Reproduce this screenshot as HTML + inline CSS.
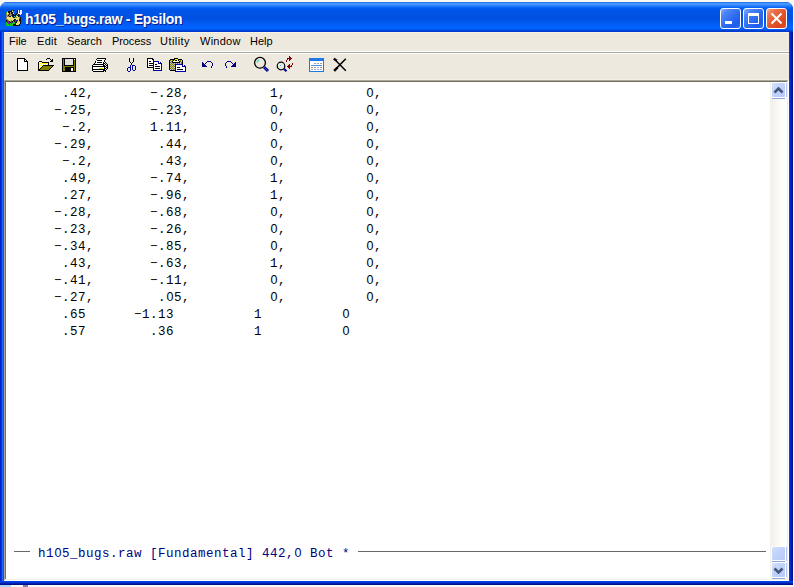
<!DOCTYPE html>
<html><head><meta charset="utf-8">
<style>
*{margin:0;padding:0;box-sizing:border-box}
html,body{width:794px;height:587px;overflow:hidden;background:#FAF9F4;position:relative}
.a{position:absolute}
svg{position:absolute;shape-rendering:crispEdges;overflow:visible}
.tt{font-family:"Liberation Sans",sans-serif;font-weight:bold;color:#fff;font-size:14px;letter-spacing:-0.3px;white-space:nowrap;text-shadow:1px 1px 0 #0A1883}
.mn{font-family:"Liberation Sans",sans-serif;font-size:11px;color:#000;white-space:nowrap;line-height:14px}
.mono{font-family:"Liberation Mono",monospace;font-size:12.5px;letter-spacing:0.5px;white-space:pre;line-height:17px}
.z{display:inline-block;width:8px;line-height:0;font-family:"Liberation Sans",sans-serif;font-size:12.5px;letter-spacing:0;text-align:center}
.btn{width:21px;height:21px;border:1px solid #fff;border-radius:3px}
.bmin{background:linear-gradient(135deg,#8AB0FA 0%,#4C84F6 22%,#2E6BF2 55%,#1F5CEB 80%,#3570F0 100%)}
.bcls{background:linear-gradient(135deg,#F4A88C 0%,#EA7450 22%,#E2552C 55%,#D8441C 80%,#E05A30 100%)}
.sb{border:1px solid #fff;border-radius:2px;background:linear-gradient(135deg,#D4E0FC 0%,#C3D3FB 40%,#B6CAF8 100%)}
</style></head><body>
<!-- bottom background strip -->
<div class="a" style="left:0;top:585px;width:11px;height:2px;background:#A8D8F8"></div>
<div class="a" style="left:23px;top:585px;width:5px;height:2px;background:#8080B0"></div>

<!-- window frame -->
<div class="a" style="left:0;top:2px;width:793px;height:583px;border-radius:7px 7px 0 0;overflow:hidden;
 background:linear-gradient(90deg,#0020D8 0,#0020D8 1px,#0838D8 1px,#0838D8 2px,#2068F0 2px,#2068F0 3px,#0058E8 3px,#0058E8 789px,#0048F0 789px,#0038E0 790px,#0020C0 791px,#00108A 792px,#00108A 793px)">
  <div class="a" style="left:0;top:0;width:793px;height:30px;
   background:linear-gradient(180deg,#1048D8 0px,#4A9CFF 1px,#3A8EFF 3px,#0E6CF6 5px,#0056EA 7px,#0050E0 16px,#005CF4 22px,#0064FF 26px,#0058F0 27.5px,#003CD0 29px,#0038C8 30px)"></div>
  <div class="a" style="left:0;top:579px;width:793px;height:4px;background:linear-gradient(180deg,#0048EE 0,#0040E4 1px,#0028C0 2px,#00149A 3px,#000A80 4px)"></div>
</div>

<!-- client area -->
<div class="a" style="left:4px;top:32px;width:785px;height:48px;background:#EDE9DE"></div>
<div class="a" style="left:4px;top:32px;width:785px;height:1px;background:#F8F4E4"></div>
<div class="a" style="left:4px;top:51px;width:785px;height:1px;background:#FFFFFB"></div>
<div class="a" style="left:4px;top:52px;width:785px;height:1px;background:#A9A89F"></div>
<div class="a" style="left:4px;top:53px;width:785px;height:1px;background:#FFFFFF"></div>
<div class="a" style="left:4px;top:79px;width:785px;height:1px;background:#F2EFE6"></div>

<!-- text area (sunken) -->
<div class="a" style="left:4px;top:80px;width:785px;height:501px;background:#fff"></div>
<div class="a" style="left:4px;top:80px;width:784px;height:1px;background:#ACA899"></div>
<div class="a" style="left:4px;top:80px;width:1px;height:500px;background:#ACA899"></div>
<div class="a" style="left:5px;top:81px;width:782px;height:1px;background:#716F64"></div>
<div class="a" style="left:5px;top:81px;width:1px;height:498px;background:#716F64"></div>
<div class="a" style="left:5px;top:579px;width:783px;height:1px;background:#F4F1E6"></div>
<div class="a" style="left:787px;top:81px;width:1px;height:498px;background:#F1EFE2"></div>

<!-- scrollbar -->
<div class="a" style="left:770px;top:82px;width:17px;height:496px;background:linear-gradient(90deg,#F3F1EC 0,#F4F3EE 4px,#FDFDFA 12px,#FEFEFE 17px)"></div>
<div class="a sb" style="left:771px;top:82px;width:15px;height:16px"></div>
<div class="a" style="left:772px;top:98px;width:13px;height:1px;background:#8FA6D9"></div>
<div class="a" style="left:786px;top:83px;width:1px;height:14px;background:#B4C6EA"></div>
<svg style="left:771px;top:82px" width="15" height="16"><path d="M3.5 10.5 L7.5 6.5 L11.5 10.5" stroke="#44557C" stroke-width="2.6" fill="none" style="shape-rendering:auto"/></svg>
<div class="a sb" style="left:771px;top:546px;width:15px;height:15px"></div>
<div class="a" style="left:772px;top:561px;width:13px;height:1px;background:#8FA6D9"></div>
<div class="a" style="left:786px;top:547px;width:1px;height:14px;background:#B4C6EA"></div>
<div class="a sb" style="left:771px;top:562px;width:15px;height:16px"></div>
<div class="a" style="left:772px;top:578px;width:13px;height:1px;background:#8FA6D9"></div>
<div class="a" style="left:786px;top:563px;width:1px;height:14px;background:#B4C6EA"></div>
<svg style="left:771px;top:562px" width="15" height="16"><path d="M3.5 6.5 L7.5 10.5 L11.5 6.5" stroke="#44557C" stroke-width="2.6" fill="none" style="shape-rendering:auto"/></svg>

<!-- title icon -->
<svg style="left:6px;top:10px" width="16" height="16"><rect x="5" y="0" width="1" height="1" fill="#101010"/><rect x="6" y="0" width="1" height="1" fill="#8C8C20"/><rect x="7" y="0" width="1" height="1" fill="#101010"/><rect x="11" y="0" width="1" height="1" fill="#101010"/><rect x="12" y="0" width="1" height="1" fill="#F0F0FF"/><rect x="13" y="0" width="1" height="1" fill="#3040E0"/><rect x="14" y="0" width="1" height="1" fill="#F0F0FF"/><rect x="15" y="0" width="1" height="1" fill="#F0F0FF"/><rect x="1" y="1" width="1" height="1" fill="#10C818"/><rect x="2" y="1" width="1" height="1" fill="#101010"/><rect x="3" y="1" width="1" height="1" fill="#101010"/><rect x="4" y="1" width="1" height="1" fill="#101010"/><rect x="5" y="1" width="1" height="1" fill="#101010"/><rect x="6" y="1" width="1" height="1" fill="#E8E070"/><rect x="7" y="1" width="1" height="1" fill="#8C8C20"/><rect x="11" y="1" width="1" height="1" fill="#101010"/><rect x="12" y="1" width="1" height="1" fill="#F0F0FF"/><rect x="13" y="1" width="1" height="1" fill="#3040E0"/><rect x="14" y="1" width="1" height="1" fill="#F0F0FF"/><rect x="15" y="1" width="1" height="1" fill="#F0F0FF"/><rect x="0" y="2" width="1" height="1" fill="#10C818"/><rect x="1" y="2" width="1" height="1" fill="#E8E070"/><rect x="2" y="2" width="1" height="1" fill="#101010"/><rect x="3" y="2" width="1" height="1" fill="#101010"/><rect x="4" y="2" width="1" height="1" fill="#A89070"/><rect x="5" y="2" width="1" height="1" fill="#101010"/><rect x="6" y="2" width="1" height="1" fill="#101010"/><rect x="7" y="2" width="1" height="1" fill="#8C8C20"/><rect x="11" y="2" width="1" height="1" fill="#101010"/><rect x="12" y="2" width="1" height="1" fill="#F0F0FF"/><rect x="13" y="2" width="1" height="1" fill="#3040E0"/><rect x="14" y="2" width="1" height="1" fill="#F0F0FF"/><rect x="15" y="2" width="1" height="1" fill="#F0F0FF"/><rect x="0" y="3" width="1" height="1" fill="#8C8C20"/><rect x="1" y="3" width="1" height="1" fill="#E8E070"/><rect x="2" y="3" width="1" height="1" fill="#E8E070"/><rect x="3" y="3" width="1" height="1" fill="#101010"/><rect x="4" y="3" width="1" height="1" fill="#A89070"/><rect x="5" y="3" width="1" height="1" fill="#101010"/><rect x="6" y="3" width="1" height="1" fill="#101010"/><rect x="7" y="3" width="1" height="1" fill="#E8E070"/><rect x="10" y="3" width="1" height="1" fill="#101010"/><rect x="12" y="3" width="1" height="1" fill="#F0F0FF"/><rect x="13" y="3" width="1" height="1" fill="#F0F0FF"/><rect x="14" y="3" width="1" height="1" fill="#F0F0FF"/><rect x="15" y="3" width="1" height="1" fill="#F0F0FF"/><rect x="0" y="4" width="1" height="1" fill="#8C8C20"/><rect x="1" y="4" width="1" height="1" fill="#E8E070"/><rect x="2" y="4" width="1" height="1" fill="#8C8C20"/><rect x="3" y="4" width="1" height="1" fill="#101010"/><rect x="4" y="4" width="1" height="1" fill="#A89070"/><rect x="5" y="4" width="1" height="1" fill="#A89070"/><rect x="6" y="4" width="1" height="1" fill="#101010"/><rect x="7" y="4" width="1" height="1" fill="#101010"/><rect x="9" y="4" width="1" height="1" fill="#101010"/><rect x="10" y="4" width="1" height="1" fill="#101010"/><rect x="11" y="4" width="1" height="1" fill="#20E0E0"/><rect x="12" y="4" width="1" height="1" fill="#101010"/><rect x="14" y="4" width="1" height="1" fill="#F0F0FF"/><rect x="0" y="5" width="1" height="1" fill="#808080"/><rect x="1" y="5" width="1" height="1" fill="#8C8C20"/><rect x="2" y="5" width="1" height="1" fill="#101010"/><rect x="3" y="5" width="1" height="1" fill="#A89070"/><rect x="4" y="5" width="1" height="1" fill="#A89070"/><rect x="5" y="5" width="1" height="1" fill="#8818A8"/><rect x="6" y="5" width="1" height="1" fill="#101010"/><rect x="7" y="5" width="1" height="1" fill="#101010"/><rect x="8" y="5" width="1" height="1" fill="#101010"/><rect x="9" y="5" width="1" height="1" fill="#101010"/><rect x="10" y="5" width="1" height="1" fill="#20E0E0"/><rect x="11" y="5" width="1" height="1" fill="#101010"/><rect x="12" y="5" width="1" height="1" fill="#101010"/><rect x="13" y="5" width="1" height="1" fill="#101010"/><rect x="0" y="6" width="1" height="1" fill="#808080"/><rect x="1" y="6" width="1" height="1" fill="#8C8C20"/><rect x="2" y="6" width="1" height="1" fill="#A89070"/><rect x="3" y="6" width="1" height="1" fill="#101010"/><rect x="4" y="6" width="1" height="1" fill="#101010"/><rect x="5" y="6" width="1" height="1" fill="#E8E070"/><rect x="6" y="6" width="1" height="1" fill="#101010"/><rect x="7" y="6" width="1" height="1" fill="#101010"/><rect x="8" y="6" width="1" height="1" fill="#20E0E0"/><rect x="9" y="6" width="1" height="1" fill="#101010"/><rect x="10" y="6" width="1" height="1" fill="#E8E070"/><rect x="11" y="6" width="1" height="1" fill="#E8E070"/><rect x="12" y="6" width="1" height="1" fill="#101010"/><rect x="0" y="7" width="1" height="1" fill="#808080"/><rect x="1" y="7" width="1" height="1" fill="#F8F0A0"/><rect x="2" y="7" width="1" height="1" fill="#E8E070"/><rect x="3" y="7" width="1" height="1" fill="#E8E070"/><rect x="4" y="7" width="1" height="1" fill="#E8E070"/><rect x="5" y="7" width="1" height="1" fill="#E8E070"/><rect x="6" y="7" width="1" height="1" fill="#E8E070"/><rect x="7" y="7" width="1" height="1" fill="#101010"/><rect x="8" y="7" width="1" height="1" fill="#101010"/><rect x="9" y="7" width="1" height="1" fill="#20E0E0"/><rect x="10" y="7" width="1" height="1" fill="#8C8C20"/><rect x="11" y="7" width="1" height="1" fill="#E8E070"/><rect x="12" y="7" width="1" height="1" fill="#E8E070"/><rect x="13" y="7" width="1" height="1" fill="#8C8C20"/><rect x="14" y="7" width="1" height="1" fill="#101010"/><rect x="0" y="8" width="1" height="1" fill="#8C8C20"/><rect x="1" y="8" width="1" height="1" fill="#E8E070"/><rect x="2" y="8" width="1" height="1" fill="#F8F0A0"/><rect x="3" y="8" width="1" height="1" fill="#E8E070"/><rect x="4" y="8" width="1" height="1" fill="#E8E070"/><rect x="5" y="8" width="1" height="1" fill="#E8E070"/><rect x="6" y="8" width="1" height="1" fill="#E8E070"/><rect x="7" y="8" width="1" height="1" fill="#E8E070"/><rect x="8" y="8" width="1" height="1" fill="#E8E070"/><rect x="9" y="8" width="1" height="1" fill="#E8E070"/><rect x="10" y="8" width="1" height="1" fill="#E8E070"/><rect x="11" y="8" width="1" height="1" fill="#E8E070"/><rect x="12" y="8" width="1" height="1" fill="#E8E070"/><rect x="13" y="8" width="1" height="1" fill="#8C8C20"/><rect x="14" y="8" width="1" height="1" fill="#101010"/><rect x="0" y="9" width="1" height="1" fill="#808080"/><rect x="1" y="9" width="1" height="1" fill="#8C8C20"/><rect x="2" y="9" width="1" height="1" fill="#E8E070"/><rect x="3" y="9" width="1" height="1" fill="#E8E070"/><rect x="4" y="9" width="1" height="1" fill="#E8E070"/><rect x="5" y="9" width="1" height="1" fill="#E8E070"/><rect x="6" y="9" width="1" height="1" fill="#E8E070"/><rect x="7" y="9" width="1" height="1" fill="#E8E070"/><rect x="8" y="9" width="1" height="1" fill="#101010"/><rect x="9" y="9" width="1" height="1" fill="#101010"/><rect x="10" y="9" width="1" height="1" fill="#E8E070"/><rect x="11" y="9" width="1" height="1" fill="#E8E070"/><rect x="12" y="9" width="1" height="1" fill="#E8E070"/><rect x="13" y="9" width="1" height="1" fill="#101010"/><rect x="14" y="9" width="1" height="1" fill="#101010"/><rect x="0" y="10" width="1" height="1" fill="#101010"/><rect x="1" y="10" width="1" height="1" fill="#8818A8"/><rect x="2" y="10" width="1" height="1" fill="#8C8C20"/><rect x="3" y="10" width="1" height="1" fill="#E8E070"/><rect x="4" y="10" width="1" height="1" fill="#E8E070"/><rect x="5" y="10" width="1" height="1" fill="#8C8C20"/><rect x="6" y="10" width="1" height="1" fill="#E8E070"/><rect x="7" y="10" width="1" height="1" fill="#101010"/><rect x="8" y="10" width="1" height="1" fill="#101010"/><rect x="9" y="10" width="1" height="1" fill="#3040E0"/><rect x="10" y="10" width="1" height="1" fill="#3040E0"/><rect x="11" y="10" width="1" height="1" fill="#101010"/><rect x="12" y="10" width="1" height="1" fill="#E8E070"/><rect x="13" y="10" width="1" height="1" fill="#101010"/><rect x="14" y="10" width="1" height="1" fill="#101010"/><rect x="0" y="11" width="1" height="1" fill="#101010"/><rect x="1" y="11" width="1" height="1" fill="#8818A8"/><rect x="2" y="11" width="1" height="1" fill="#8818A8"/><rect x="3" y="11" width="1" height="1" fill="#101010"/><rect x="4" y="11" width="1" height="1" fill="#8C8C20"/><rect x="5" y="11" width="1" height="1" fill="#8818A8"/><rect x="6" y="11" width="1" height="1" fill="#101010"/><rect x="7" y="11" width="1" height="1" fill="#10C818"/><rect x="8" y="11" width="1" height="1" fill="#101010"/><rect x="9" y="11" width="1" height="1" fill="#3040E0"/><rect x="10" y="11" width="1" height="1" fill="#101010"/><rect x="11" y="11" width="1" height="1" fill="#A89070"/><rect x="12" y="11" width="1" height="1" fill="#E8E070"/><rect x="13" y="11" width="1" height="1" fill="#A89070"/><rect x="14" y="11" width="1" height="1" fill="#101010"/><rect x="0" y="12" width="1" height="1" fill="#10C818"/><rect x="1" y="12" width="1" height="1" fill="#8818A8"/><rect x="2" y="12" width="1" height="1" fill="#8818A8"/><rect x="3" y="12" width="1" height="1" fill="#8818A8"/><rect x="4" y="12" width="1" height="1" fill="#101010"/><rect x="5" y="12" width="1" height="1" fill="#8818A8"/><rect x="6" y="12" width="1" height="1" fill="#8818A8"/><rect x="7" y="12" width="1" height="1" fill="#10C818"/><rect x="8" y="12" width="1" height="1" fill="#10C818"/><rect x="9" y="12" width="1" height="1" fill="#101010"/><rect x="10" y="12" width="1" height="1" fill="#101010"/><rect x="11" y="12" width="1" height="1" fill="#E8E070"/><rect x="12" y="12" width="1" height="1" fill="#E8E070"/><rect x="13" y="12" width="1" height="1" fill="#E8E070"/><rect x="14" y="12" width="1" height="1" fill="#101010"/><rect x="0" y="13" width="1" height="1" fill="#10C818"/><rect x="1" y="13" width="1" height="1" fill="#10C818"/><rect x="2" y="13" width="1" height="1" fill="#8818A8"/><rect x="3" y="13" width="1" height="1" fill="#8818A8"/><rect x="4" y="13" width="1" height="1" fill="#10C818"/><rect x="5" y="13" width="1" height="1" fill="#8818A8"/><rect x="6" y="13" width="1" height="1" fill="#10C818"/><rect x="7" y="13" width="1" height="1" fill="#10C818"/><rect x="8" y="13" width="1" height="1" fill="#10C818"/><rect x="9" y="13" width="1" height="1" fill="#101010"/><rect x="10" y="13" width="1" height="1" fill="#E8E070"/><rect x="11" y="13" width="1" height="1" fill="#E8E070"/><rect x="12" y="13" width="1" height="1" fill="#E8E070"/><rect x="13" y="13" width="1" height="1" fill="#E8E070"/><rect x="14" y="13" width="1" height="1" fill="#101010"/><rect x="0" y="14" width="1" height="1" fill="#10C818"/><rect x="1" y="14" width="1" height="1" fill="#10C818"/><rect x="2" y="14" width="1" height="1" fill="#10C818"/><rect x="3" y="14" width="1" height="1" fill="#8818A8"/><rect x="4" y="14" width="1" height="1" fill="#10C818"/><rect x="5" y="14" width="1" height="1" fill="#10C818"/><rect x="6" y="14" width="1" height="1" fill="#10C818"/><rect x="7" y="14" width="1" height="1" fill="#101010"/><rect x="8" y="14" width="1" height="1" fill="#101010"/><rect x="9" y="14" width="1" height="1" fill="#101010"/><rect x="10" y="14" width="1" height="1" fill="#E8E070"/><rect x="11" y="14" width="1" height="1" fill="#E8E070"/><rect x="12" y="14" width="1" height="1" fill="#E8E070"/><rect x="13" y="14" width="1" height="1" fill="#101010"/><rect x="0" y="15" width="1" height="1" fill="#10C818"/><rect x="1" y="15" width="1" height="1" fill="#10C818"/><rect x="2" y="15" width="1" height="1" fill="#10C818"/><rect x="3" y="15" width="1" height="1" fill="#10C818"/><rect x="4" y="15" width="1" height="1" fill="#10C818"/><rect x="5" y="15" width="1" height="1" fill="#10C818"/><rect x="6" y="15" width="1" height="1" fill="#10C818"/><rect x="7" y="15" width="1" height="1" fill="#101010"/><rect x="8" y="15" width="1" height="1" fill="#101010"/><rect x="9" y="15" width="1" height="1" fill="#101010"/><rect x="10" y="15" width="1" height="1" fill="#101010"/><rect x="11" y="15" width="1" height="1" fill="#101010"/><rect x="12" y="15" width="1" height="1" fill="#101010"/><rect x="13" y="15" width="1" height="1" fill="#101010"/></svg>
<!-- title text -->
<div class="a tt" style="left:25px;top:11px;">h105_bugs.raw - Epsilon</div>

<!-- title buttons -->
<div class="a btn bmin" style="left:720px;top:8px"></div>
<div class="a" style="left:725px;top:21px;width:7px;height:3px;background:#fff"></div>
<div class="a btn bmin" style="left:743px;top:8px"></div>
<div class="a" style="left:748px;top:13px;width:11px;height:11px;border:1px solid #fff;border-top-width:3px"></div>
<div class="a btn bcls" style="left:766px;top:8px"></div>
<svg style="left:766px;top:8px" width="21" height="21"><path d="M5.5 5.5 L15.5 15.5 M15.5 5.5 L5.5 15.5" stroke="#fff" stroke-width="2" style="shape-rendering:auto"/></svg>

<!-- menu -->
<div class="a mn" style="left:9px;top:34px">File</div>
<div class="a mn" style="left:37px;top:34px;letter-spacing:0.3px">Edit</div>
<div class="a mn" style="left:67px;top:34px">Search</div>
<div class="a mn" style="left:112px;top:34px;letter-spacing:-0.1px">Process</div>
<div class="a mn" style="left:160px;top:34px;letter-spacing:0.45px">Utility</div>
<div class="a mn" style="left:200px;top:34px;letter-spacing:0.25px">Window</div>
<div class="a mn" style="left:250px;top:34px">Help</div>


<!-- new -->
<svg style="left:17px;top:58px" width="11" height="13"><rect x="0" y="0" width="8" height="1" fill="#000"/><rect x="0" y="1" width="1" height="1" fill="#000"/><rect x="1" y="1" width="6" height="1" fill="#FFFFFF"/><rect x="7" y="1" width="2" height="1" fill="#000"/><rect x="0" y="2" width="1" height="1" fill="#000"/><rect x="1" y="2" width="6" height="1" fill="#FFFFFF"/><rect x="7" y="2" width="1" height="1" fill="#000"/><rect x="8" y="2" width="1" height="1" fill="#FFFFFF"/><rect x="9" y="2" width="1" height="1" fill="#000"/><rect x="0" y="3" width="1" height="1" fill="#000"/><rect x="1" y="3" width="6" height="1" fill="#FFFFFF"/><rect x="7" y="3" width="4" height="1" fill="#000"/><rect x="0" y="4" width="1" height="1" fill="#000"/><rect x="1" y="4" width="9" height="1" fill="#FFFFFF"/><rect x="10" y="4" width="1" height="1" fill="#000"/><rect x="0" y="5" width="1" height="1" fill="#000"/><rect x="1" y="5" width="9" height="1" fill="#FFFFFF"/><rect x="10" y="5" width="1" height="1" fill="#000"/><rect x="0" y="6" width="1" height="1" fill="#000"/><rect x="1" y="6" width="9" height="1" fill="#FFFFFF"/><rect x="10" y="6" width="1" height="1" fill="#000"/><rect x="0" y="7" width="1" height="1" fill="#000"/><rect x="1" y="7" width="9" height="1" fill="#FFFFFF"/><rect x="10" y="7" width="1" height="1" fill="#000"/><rect x="0" y="8" width="1" height="1" fill="#000"/><rect x="1" y="8" width="9" height="1" fill="#FFFFFF"/><rect x="10" y="8" width="1" height="1" fill="#000"/><rect x="0" y="9" width="1" height="1" fill="#000"/><rect x="1" y="9" width="9" height="1" fill="#FFFFFF"/><rect x="10" y="9" width="1" height="1" fill="#000"/><rect x="0" y="10" width="1" height="1" fill="#000"/><rect x="1" y="10" width="9" height="1" fill="#FFFFFF"/><rect x="10" y="10" width="1" height="1" fill="#000"/><rect x="0" y="11" width="1" height="1" fill="#000"/><rect x="1" y="11" width="9" height="1" fill="#FFFFFF"/><rect x="10" y="11" width="1" height="1" fill="#000"/><rect x="0" y="12" width="11" height="1" fill="#000"/></svg>
<!-- open -->
<svg style="left:37px;top:58px" width="17" height="13"><rect x="10" y="0" width="3" height="1" fill="#000"/><rect x="9" y="1" width="1" height="1" fill="#000"/><rect x="13" y="1" width="1" height="1" fill="#000"/><rect x="15" y="1" width="1" height="1" fill="#000"/><rect x="14" y="2" width="2" height="1" fill="#000"/><rect x="2" y="3" width="3" height="1" fill="#000"/><rect x="13" y="3" width="3" height="1" fill="#000"/><rect x="1" y="4" width="1" height="1" fill="#000"/><rect x="2" y="4" width="1" height="1" fill="#FFFF00"/><rect x="3" y="4" width="1" height="1" fill="#FFFFFF"/><rect x="4" y="4" width="1" height="1" fill="#FFFF00"/><rect x="5" y="4" width="7" height="1" fill="#000"/><rect x="1" y="5" width="1" height="1" fill="#000"/><rect x="2" y="5" width="1" height="1" fill="#FFFFFF"/><rect x="3" y="5" width="1" height="1" fill="#FFFF00"/><rect x="4" y="5" width="1" height="1" fill="#FFFFFF"/><rect x="5" y="5" width="1" height="1" fill="#FFFF00"/><rect x="6" y="5" width="1" height="1" fill="#FFFFFF"/><rect x="7" y="5" width="1" height="1" fill="#FFFF00"/><rect x="8" y="5" width="1" height="1" fill="#FFFFFF"/><rect x="9" y="5" width="1" height="1" fill="#FFFF00"/><rect x="10" y="5" width="1" height="1" fill="#FFFFFF"/><rect x="11" y="5" width="1" height="1" fill="#000"/><rect x="1" y="6" width="1" height="1" fill="#000"/><rect x="2" y="6" width="1" height="1" fill="#FFFF00"/><rect x="3" y="6" width="1" height="1" fill="#FFFFFF"/><rect x="4" y="6" width="1" height="1" fill="#FFFF00"/><rect x="5" y="6" width="1" height="1" fill="#FFFFFF"/><rect x="6" y="6" width="1" height="1" fill="#FFFF00"/><rect x="7" y="6" width="1" height="1" fill="#FFFFFF"/><rect x="8" y="6" width="1" height="1" fill="#FFFF00"/><rect x="9" y="6" width="1" height="1" fill="#FFFFFF"/><rect x="10" y="6" width="1" height="1" fill="#FFFF00"/><rect x="11" y="6" width="1" height="1" fill="#000"/><rect x="1" y="7" width="1" height="1" fill="#000"/><rect x="2" y="7" width="1" height="1" fill="#FFFFFF"/><rect x="3" y="7" width="1" height="1" fill="#FFFF00"/><rect x="4" y="7" width="1" height="1" fill="#FFFFFF"/><rect x="5" y="7" width="1" height="1" fill="#FFFF00"/><rect x="6" y="7" width="11" height="1" fill="#000"/><rect x="1" y="8" width="1" height="1" fill="#000"/><rect x="2" y="8" width="1" height="1" fill="#FFFF00"/><rect x="3" y="8" width="1" height="1" fill="#FFFFFF"/><rect x="4" y="8" width="1" height="1" fill="#FFFF00"/><rect x="5" y="8" width="1" height="1" fill="#000"/><rect x="6" y="8" width="9" height="1" fill="#808000"/><rect x="15" y="8" width="1" height="1" fill="#000"/><rect x="1" y="9" width="1" height="1" fill="#000"/><rect x="2" y="9" width="1" height="1" fill="#FFFFFF"/><rect x="3" y="9" width="1" height="1" fill="#FFFF00"/><rect x="4" y="9" width="1" height="1" fill="#000"/><rect x="5" y="9" width="9" height="1" fill="#808000"/><rect x="14" y="9" width="1" height="1" fill="#000"/><rect x="1" y="10" width="1" height="1" fill="#000"/><rect x="2" y="10" width="1" height="1" fill="#FFFF00"/><rect x="3" y="10" width="1" height="1" fill="#000"/><rect x="4" y="10" width="9" height="1" fill="#808000"/><rect x="13" y="10" width="1" height="1" fill="#000"/><rect x="1" y="11" width="2" height="1" fill="#000"/><rect x="3" y="11" width="9" height="1" fill="#808000"/><rect x="12" y="11" width="1" height="1" fill="#000"/><rect x="1" y="12" width="11" height="1" fill="#000"/></svg>
<!-- save -->
<svg style="left:62px;top:58px" width="14" height="14">
<rect x="0" y="0" width="14" height="14" fill="#000"/>
<rect x="1" y="1" width="12" height="12" fill="#808000"/>
<rect x="2" y="0" width="10" height="8" fill="#000"/>
<rect x="3" y="1" width="8" height="6" fill="#E0E0DC"/>
<rect x="12" y="1" width="1" height="1" fill="#fff"/>
<rect x="3" y="9" width="9" height="5" fill="#000"/>
<rect x="9" y="10" width="2" height="3" fill="#fff"/>
</svg>
<!-- print -->
<svg style="left:92px;top:58px" width="16" height="14"><rect x="5" y="0" width="9" height="1" fill="#000"/><rect x="4" y="1" width="1" height="1" fill="#000"/><rect x="5" y="1" width="8" height="1" fill="#FFFFFF"/><rect x="13" y="1" width="1" height="1" fill="#000"/><rect x="4" y="2" width="1" height="1" fill="#FFFFFF"/><rect x="5" y="2" width="5" height="1" fill="#000"/><rect x="10" y="2" width="2" height="1" fill="#FFFFFF"/><rect x="12" y="2" width="1" height="1" fill="#000"/><rect x="3" y="3" width="1" height="1" fill="#000"/><rect x="4" y="3" width="8" height="1" fill="#FFFFFF"/><rect x="12" y="3" width="1" height="1" fill="#000"/><rect x="3" y="4" width="1" height="1" fill="#000"/><rect x="4" y="4" width="1" height="1" fill="#FFFFFF"/><rect x="5" y="4" width="5" height="1" fill="#000"/><rect x="10" y="4" width="1" height="1" fill="#FFFFFF"/><rect x="11" y="4" width="1" height="1" fill="#000"/><rect x="13" y="4" width="1" height="1" fill="#000"/><rect x="2" y="5" width="1" height="1" fill="#000"/><rect x="3" y="5" width="8" height="1" fill="#FFFFFF"/><rect x="11" y="5" width="2" height="1" fill="#000"/><rect x="14" y="5" width="1" height="1" fill="#000"/><rect x="1" y="6" width="11" height="1" fill="#000"/><rect x="12" y="6" width="1" height="1" fill="#FFFFFF"/><rect x="13" y="6" width="1" height="1" fill="#000"/><rect x="15" y="6" width="1" height="1" fill="#000"/><rect x="0" y="7" width="1" height="1" fill="#000"/><rect x="1" y="7" width="10" height="1" fill="#FFFFFF"/><rect x="11" y="7" width="2" height="1" fill="#000"/><rect x="13" y="7" width="1" height="1" fill="#FFFFFF"/><rect x="14" y="7" width="2" height="1" fill="#000"/><rect x="0" y="8" width="14" height="1" fill="#000"/><rect x="15" y="8" width="1" height="1" fill="#000"/><rect x="0" y="9" width="1" height="1" fill="#000"/><rect x="1" y="9" width="11" height="1" fill="#FFFFFF"/><rect x="12" y="9" width="1" height="1" fill="#000"/><rect x="13" y="9" width="1" height="1" fill="#FFFFFF"/><rect x="14" y="9" width="2" height="1" fill="#000"/><rect x="0" y="10" width="1" height="1" fill="#000"/><rect x="1" y="10" width="6" height="1" fill="#FFFFFF"/><rect x="7" y="10" width="4" height="1" fill="#E0E000"/><rect x="11" y="10" width="1" height="1" fill="#FFFFFF"/><rect x="12" y="10" width="2" height="1" fill="#000"/><rect x="15" y="10" width="1" height="1" fill="#000"/><rect x="0" y="11" width="13" height="1" fill="#000"/><rect x="13" y="11" width="1" height="1" fill="#FFFFFF"/><rect x="14" y="11" width="1" height="1" fill="#000"/><rect x="0" y="12" width="1" height="1" fill="#000"/><rect x="2" y="12" width="9" height="1" fill="#FFFFFF"/><rect x="11" y="12" width="3" height="1" fill="#000"/><rect x="1" y="13" width="11" height="1" fill="#000"/><rect x="13" y="13" width="1" height="1" fill="#000"/></svg>
<!-- cut -->
<svg style="left:126px;top:58px" width="11" height="14"><rect x="3" y="0" width="1" height="1" fill="#000"/><rect x="7" y="0" width="1" height="1" fill="#000"/><rect x="3" y="1" width="1" height="1" fill="#000"/><rect x="7" y="1" width="1" height="1" fill="#000"/><rect x="3" y="2" width="1" height="1" fill="#000"/><rect x="7" y="2" width="1" height="1" fill="#000"/><rect x="3" y="3" width="1" height="1" fill="#000"/><rect x="7" y="3" width="1" height="1" fill="#000"/><rect x="4" y="4" width="1" height="1" fill="#000"/><rect x="6" y="4" width="1" height="1" fill="#000"/><rect x="5" y="5" width="1" height="1" fill="#000"/><rect x="5" y="6" width="1" height="1" fill="#0000A0"/><rect x="4" y="7" width="1" height="1" fill="#0000A0"/><rect x="6" y="7" width="3" height="1" fill="#0000A0"/><rect x="4" y="8" width="1" height="1" fill="#0000A0"/><rect x="6" y="8" width="1" height="1" fill="#0000A0"/><rect x="9" y="8" width="1" height="1" fill="#0000A0"/><rect x="2" y="9" width="3" height="1" fill="#0000A0"/><rect x="6" y="9" width="1" height="1" fill="#0000A0"/><rect x="9" y="9" width="1" height="1" fill="#0000A0"/><rect x="1" y="10" width="1" height="1" fill="#0000A0"/><rect x="4" y="10" width="1" height="1" fill="#0000A0"/><rect x="6" y="10" width="1" height="1" fill="#0000A0"/><rect x="9" y="10" width="1" height="1" fill="#0000A0"/><rect x="1" y="11" width="1" height="1" fill="#0000A0"/><rect x="4" y="11" width="1" height="1" fill="#0000A0"/><rect x="6" y="11" width="1" height="1" fill="#0000A0"/><rect x="9" y="11" width="1" height="1" fill="#0000A0"/><rect x="1" y="12" width="1" height="1" fill="#0000A0"/><rect x="4" y="12" width="1" height="1" fill="#0000A0"/><rect x="7" y="12" width="2" height="1" fill="#0000A0"/><rect x="2" y="13" width="2" height="1" fill="#0000A0"/></svg>
<!-- copy -->
<svg style="left:147px;top:58px" width="15" height="13"><rect x="0" y="0" width="6" height="1" fill="#000"/><rect x="0" y="1" width="1" height="1" fill="#000"/><rect x="1" y="1" width="4" height="1" fill="#FFFFFF"/><rect x="5" y="1" width="2" height="1" fill="#000"/><rect x="0" y="2" width="1" height="1" fill="#000"/><rect x="1" y="2" width="5" height="1" fill="#FFFFFF"/><rect x="6" y="2" width="1" height="1" fill="#000"/><rect x="0" y="3" width="1" height="1" fill="#000"/><rect x="1" y="3" width="1" height="1" fill="#FFFFFF"/><rect x="2" y="3" width="2" height="1" fill="#000"/><rect x="4" y="3" width="2" height="1" fill="#FFFFFF"/><rect x="6" y="3" width="6" height="1" fill="#0000A0"/><rect x="0" y="4" width="1" height="1" fill="#000"/><rect x="1" y="4" width="5" height="1" fill="#FFFFFF"/><rect x="6" y="4" width="1" height="1" fill="#0000A0"/><rect x="7" y="4" width="4" height="1" fill="#FFFFFF"/><rect x="11" y="4" width="1" height="1" fill="#0000A0"/><rect x="12" y="4" width="1" height="1" fill="#FFFFFF"/><rect x="13" y="4" width="1" height="1" fill="#0000A0"/><rect x="0" y="5" width="1" height="1" fill="#000"/><rect x="1" y="5" width="1" height="1" fill="#FFFFFF"/><rect x="2" y="5" width="4" height="1" fill="#000"/><rect x="6" y="5" width="1" height="1" fill="#0000A0"/><rect x="7" y="5" width="4" height="1" fill="#FFFFFF"/><rect x="11" y="5" width="4" height="1" fill="#0000A0"/><rect x="0" y="6" width="1" height="1" fill="#000"/><rect x="1" y="6" width="5" height="1" fill="#FFFFFF"/><rect x="6" y="6" width="1" height="1" fill="#0000A0"/><rect x="7" y="6" width="1" height="1" fill="#FFFFFF"/><rect x="8" y="6" width="2" height="1" fill="#000"/><rect x="10" y="6" width="4" height="1" fill="#FFFFFF"/><rect x="14" y="6" width="1" height="1" fill="#0000A0"/><rect x="0" y="7" width="1" height="1" fill="#000"/><rect x="1" y="7" width="1" height="1" fill="#FFFFFF"/><rect x="2" y="7" width="4" height="1" fill="#000"/><rect x="6" y="7" width="1" height="1" fill="#0000A0"/><rect x="7" y="7" width="7" height="1" fill="#FFFFFF"/><rect x="14" y="7" width="1" height="1" fill="#0000A0"/><rect x="0" y="8" width="1" height="1" fill="#000"/><rect x="1" y="8" width="5" height="1" fill="#FFFFFF"/><rect x="6" y="8" width="1" height="1" fill="#0000A0"/><rect x="7" y="8" width="1" height="1" fill="#FFFFFF"/><rect x="8" y="8" width="5" height="1" fill="#000"/><rect x="13" y="8" width="1" height="1" fill="#FFFFFF"/><rect x="14" y="8" width="1" height="1" fill="#0000A0"/><rect x="0" y="9" width="6" height="1" fill="#000"/><rect x="6" y="9" width="1" height="1" fill="#0000A0"/><rect x="7" y="9" width="7" height="1" fill="#FFFFFF"/><rect x="14" y="9" width="1" height="1" fill="#0000A0"/><rect x="6" y="10" width="1" height="1" fill="#0000A0"/><rect x="7" y="10" width="1" height="1" fill="#FFFFFF"/><rect x="8" y="10" width="5" height="1" fill="#000"/><rect x="13" y="10" width="1" height="1" fill="#FFFFFF"/><rect x="14" y="10" width="1" height="1" fill="#0000A0"/><rect x="6" y="11" width="1" height="1" fill="#0000A0"/><rect x="7" y="11" width="7" height="1" fill="#FFFFFF"/><rect x="14" y="11" width="1" height="1" fill="#0000A0"/><rect x="6" y="12" width="9" height="1" fill="#0000A0"/></svg>
<!-- paste -->
<svg style="left:169px;top:58px" width="17" height="14"><rect x="5" y="0" width="4" height="1" fill="#000"/><rect x="1" y="1" width="5" height="1" fill="#000"/><rect x="6" y="1" width="3" height="1" fill="#FFFF00"/><rect x="9" y="1" width="4" height="1" fill="#000"/><rect x="0" y="2" width="1" height="1" fill="#000"/><rect x="1" y="2" width="1" height="1" fill="#808000"/><rect x="2" y="2" width="1" height="1" fill="#C0C0C0"/><rect x="3" y="2" width="1" height="1" fill="#808000"/><rect x="4" y="2" width="1" height="1" fill="#000"/><rect x="5" y="2" width="1" height="1" fill="#FFFF00"/><rect x="6" y="2" width="2" height="1" fill="#000"/><rect x="8" y="2" width="1" height="1" fill="#FFFF00"/><rect x="9" y="2" width="1" height="1" fill="#000"/><rect x="10" y="2" width="1" height="1" fill="#C0C0C0"/><rect x="11" y="2" width="1" height="1" fill="#808000"/><rect x="12" y="2" width="1" height="1" fill="#C0C0C0"/><rect x="13" y="2" width="1" height="1" fill="#000"/><rect x="0" y="3" width="1" height="1" fill="#000"/><rect x="1" y="3" width="1" height="1" fill="#C0C0C0"/><rect x="2" y="3" width="1" height="1" fill="#808000"/><rect x="3" y="3" width="1" height="1" fill="#000"/><rect x="4" y="3" width="6" height="1" fill="#FFFFFF"/><rect x="10" y="3" width="1" height="1" fill="#000"/><rect x="11" y="3" width="1" height="1" fill="#808000"/><rect x="12" y="3" width="1" height="1" fill="#C0C0C0"/><rect x="13" y="3" width="1" height="1" fill="#000"/><rect x="0" y="4" width="1" height="1" fill="#000"/><rect x="1" y="4" width="1" height="1" fill="#808000"/><rect x="2" y="4" width="1" height="1" fill="#C0C0C0"/><rect x="3" y="4" width="8" height="1" fill="#000"/><rect x="11" y="4" width="1" height="1" fill="#C0C0C0"/><rect x="12" y="4" width="1" height="1" fill="#808000"/><rect x="13" y="4" width="1" height="1" fill="#000"/><rect x="0" y="5" width="1" height="1" fill="#000"/><rect x="1" y="5" width="1" height="1" fill="#C0C0C0"/><rect x="2" y="5" width="1" height="1" fill="#808000"/><rect x="3" y="5" width="1" height="1" fill="#C0C0C0"/><rect x="4" y="5" width="1" height="1" fill="#808000"/><rect x="5" y="5" width="1" height="1" fill="#C0C0C0"/><rect x="6" y="5" width="1" height="1" fill="#808000"/><rect x="7" y="5" width="1" height="1" fill="#C0C0C0"/><rect x="8" y="5" width="1" height="1" fill="#808000"/><rect x="9" y="5" width="1" height="1" fill="#C0C0C0"/><rect x="10" y="5" width="1" height="1" fill="#808000"/><rect x="11" y="5" width="1" height="1" fill="#C0C0C0"/><rect x="12" y="5" width="1" height="1" fill="#808000"/><rect x="13" y="5" width="1" height="1" fill="#000"/><rect x="0" y="6" width="1" height="1" fill="#000"/><rect x="1" y="6" width="1" height="1" fill="#808000"/><rect x="2" y="6" width="1" height="1" fill="#C0C0C0"/><rect x="3" y="6" width="1" height="1" fill="#808000"/><rect x="4" y="6" width="1" height="1" fill="#C0C0C0"/><rect x="5" y="6" width="1" height="1" fill="#808000"/><rect x="6" y="6" width="8" height="1" fill="#0000A0"/><rect x="0" y="7" width="1" height="1" fill="#000"/><rect x="1" y="7" width="1" height="1" fill="#C0C0C0"/><rect x="2" y="7" width="1" height="1" fill="#808000"/><rect x="3" y="7" width="1" height="1" fill="#C0C0C0"/><rect x="4" y="7" width="1" height="1" fill="#808000"/><rect x="5" y="7" width="1" height="1" fill="#C0C0C0"/><rect x="6" y="7" width="1" height="1" fill="#0000A0"/><rect x="7" y="7" width="6" height="1" fill="#FFFFFF"/><rect x="13" y="7" width="1" height="1" fill="#0000A0"/><rect x="14" y="7" width="1" height="1" fill="#FFFFFF"/><rect x="15" y="7" width="1" height="1" fill="#0000A0"/><rect x="0" y="8" width="1" height="1" fill="#000"/><rect x="1" y="8" width="1" height="1" fill="#808000"/><rect x="2" y="8" width="1" height="1" fill="#C0C0C0"/><rect x="3" y="8" width="1" height="1" fill="#808000"/><rect x="4" y="8" width="1" height="1" fill="#C0C0C0"/><rect x="5" y="8" width="1" height="1" fill="#808000"/><rect x="6" y="8" width="1" height="1" fill="#0000A0"/><rect x="7" y="8" width="6" height="1" fill="#FFFFFF"/><rect x="13" y="8" width="4" height="1" fill="#0000A0"/><rect x="0" y="9" width="1" height="1" fill="#000"/><rect x="1" y="9" width="1" height="1" fill="#C0C0C0"/><rect x="2" y="9" width="1" height="1" fill="#808000"/><rect x="3" y="9" width="1" height="1" fill="#C0C0C0"/><rect x="4" y="9" width="1" height="1" fill="#808000"/><rect x="5" y="9" width="1" height="1" fill="#C0C0C0"/><rect x="6" y="9" width="1" height="1" fill="#0000A0"/><rect x="7" y="9" width="1" height="1" fill="#FFFFFF"/><rect x="8" y="9" width="3" height="1" fill="#000"/><rect x="11" y="9" width="5" height="1" fill="#FFFFFF"/><rect x="16" y="9" width="1" height="1" fill="#0000A0"/><rect x="0" y="10" width="1" height="1" fill="#000"/><rect x="1" y="10" width="1" height="1" fill="#808000"/><rect x="2" y="10" width="1" height="1" fill="#C0C0C0"/><rect x="3" y="10" width="1" height="1" fill="#808000"/><rect x="4" y="10" width="1" height="1" fill="#C0C0C0"/><rect x="5" y="10" width="1" height="1" fill="#808000"/><rect x="6" y="10" width="1" height="1" fill="#0000A0"/><rect x="7" y="10" width="9" height="1" fill="#FFFFFF"/><rect x="16" y="10" width="1" height="1" fill="#0000A0"/><rect x="0" y="11" width="1" height="1" fill="#000"/><rect x="1" y="11" width="1" height="1" fill="#C0C0C0"/><rect x="2" y="11" width="1" height="1" fill="#808000"/><rect x="3" y="11" width="1" height="1" fill="#C0C0C0"/><rect x="4" y="11" width="1" height="1" fill="#808000"/><rect x="5" y="11" width="1" height="1" fill="#C0C0C0"/><rect x="6" y="11" width="1" height="1" fill="#0000A0"/><rect x="7" y="11" width="1" height="1" fill="#FFFFFF"/><rect x="8" y="11" width="6" height="1" fill="#000"/><rect x="14" y="11" width="2" height="1" fill="#FFFFFF"/><rect x="16" y="11" width="1" height="1" fill="#0000A0"/><rect x="1" y="12" width="5" height="1" fill="#000"/><rect x="6" y="12" width="1" height="1" fill="#0000A0"/><rect x="7" y="12" width="9" height="1" fill="#FFFFFF"/><rect x="16" y="12" width="1" height="1" fill="#0000A0"/><rect x="6" y="13" width="11" height="1" fill="#0000A0"/></svg>
<!-- undo -->
<svg style="left:201px;top:61px" width="13" height="7"><rect x="6" y="0" width="4" height="1" fill="#000080"/><rect x="1" y="1" width="1" height="1" fill="#000080"/><rect x="5" y="1" width="1" height="1" fill="#000080"/><rect x="10" y="1" width="1" height="1" fill="#000080"/><rect x="1" y="2" width="2" height="1" fill="#000080"/><rect x="4" y="2" width="1" height="1" fill="#000080"/><rect x="11" y="2" width="1" height="1" fill="#000080"/><rect x="1" y="3" width="3" height="1" fill="#000080"/><rect x="11" y="3" width="1" height="1" fill="#000080"/><rect x="1" y="4" width="4" height="1" fill="#000080"/><rect x="11" y="4" width="1" height="1" fill="#000080"/><rect x="1" y="5" width="5" height="1" fill="#000080"/><rect x="10" y="5" width="1" height="1" fill="#000080"/><rect x="10" y="6" width="1" height="1" fill="#000080"/></svg>
<!-- redo -->
<svg style="left:224px;top:61px" width="13" height="7"><rect x="3" y="0" width="4" height="1" fill="#000080"/><rect x="2" y="1" width="1" height="1" fill="#000080"/><rect x="7" y="1" width="1" height="1" fill="#000080"/><rect x="11" y="1" width="1" height="1" fill="#000080"/><rect x="1" y="2" width="1" height="1" fill="#000080"/><rect x="8" y="2" width="1" height="1" fill="#000080"/><rect x="10" y="2" width="2" height="1" fill="#000080"/><rect x="1" y="3" width="1" height="1" fill="#000080"/><rect x="9" y="3" width="3" height="1" fill="#000080"/><rect x="1" y="4" width="1" height="1" fill="#000080"/><rect x="8" y="4" width="4" height="1" fill="#000080"/><rect x="2" y="5" width="1" height="1" fill="#000080"/><rect x="7" y="5" width="5" height="1" fill="#000080"/><rect x="2" y="6" width="1" height="1" fill="#000080"/></svg>
<!-- find -->
<svg style="left:253px;top:56px" width="17" height="17">
<circle cx="7" cy="6.8" r="5.4" fill="none" stroke="#000" stroke-width="1.3" style="shape-rendering:auto"/>
<path d="M4 6.5 Q4.5 4.5 6.5 4" fill="none" stroke="#00E8E8" stroke-width="1.2" style="shape-rendering:auto"/>
<path d="M11.2 11.2 L15 15" stroke="#0000A0" stroke-width="3" style="shape-rendering:auto"/>
<path d="M11.8 11.8 L14.6 14.6" stroke="#8080D0" stroke-width="0.6" style="shape-rendering:auto"/>
</svg>
<!-- replace -->
<svg style="left:276px;top:56px" width="18" height="17">
<circle cx="5" cy="10" r="3.8" fill="none" stroke="#000" stroke-width="1.2" style="shape-rendering:auto"/>
<rect x="4" y="9" width="1" height="1" fill="#00E0E0"/>
<path d="M7.8 12.8 L10.5 15.3" stroke="#0000A0" stroke-width="2.2" style="shape-rendering:auto"/>
</svg>
<svg style="left:285px;top:56px" width="9" height="13"><rect x="4" y="0" width="1" height="1" fill="#800000"/><rect x="4" y="1" width="2" height="1" fill="#800000"/><rect x="2" y="2" width="5" height="1" fill="#800000"/><rect x="2" y="3" width="1" height="1" fill="#800000"/><rect x="4" y="3" width="2" height="1" fill="#800000"/><rect x="1" y="4" width="1" height="1" fill="#800000"/><rect x="4" y="4" width="1" height="1" fill="#800000"/><rect x="1" y="5" width="1" height="1" fill="#800000"/><rect x="7" y="7" width="1" height="1" fill="#800000"/><rect x="4" y="8" width="1" height="1" fill="#800000"/><rect x="7" y="8" width="1" height="1" fill="#800000"/><rect x="3" y="9" width="2" height="1" fill="#800000"/><rect x="6" y="9" width="1" height="1" fill="#800000"/><rect x="2" y="10" width="5" height="1" fill="#800000"/><rect x="3" y="11" width="2" height="1" fill="#800000"/><rect x="4" y="12" width="1" height="1" fill="#800000"/></svg>
<!-- window -->
<svg style="left:309px;top:58px" width="15" height="14">
<rect x="0" y="0" width="15" height="14" rx="1" fill="#1E78E6"/>
<rect x="1" y="3" width="13" height="10" fill="#fff"/>
<rect x="5" y="5" width="2" height="1" fill="#A0A0A0"/><rect x="8" y="5" width="2" height="1" fill="#A0A0A0"/><rect x="11" y="5" width="2" height="1" fill="#A0A0A0"/>
<rect x="2" y="7" width="11" height="1" fill="#4A90E0"/>
<rect x="2" y="9" width="2" height="1" fill="#A09890"/><rect x="5" y="9" width="2" height="1" fill="#A0A0A0"/><rect x="8" y="9" width="2" height="1" fill="#A0B0C0"/><rect x="11" y="9" width="2" height="1" fill="#A09080"/>
<rect x="2" y="11" width="2" height="1" fill="#A0A0A0"/><rect x="5" y="11" width="2" height="1" fill="#A0A0A0"/><rect x="8" y="11" width="2" height="1" fill="#A0B0C0"/><rect x="11" y="11" width="2" height="1" fill="#A0B8D0"/>
</svg>
<!-- close x -->
<svg style="left:333px;top:58px" width="14" height="14">
<path d="M1 0.8 L12.8 12.8 M12.8 0.8 L1.2 12.6" stroke="#000" stroke-width="1.5" style="shape-rendering:auto"/>
<path d="M1.2 12.8 L4.5 9.5" stroke="#000" stroke-width="2.4" style="shape-rendering:auto"/>
<path d="M0.8 0.8 L3.8 2.6" stroke="#000" stroke-width="2.2" style="shape-rendering:auto"/>
</svg>


<!-- text -->
<div class="a mono" style="left:6px;top:86px;color:#000">       .42,       −.28,          1,          <span class="z">0</span>,
      −.25,       −.23,          <span class="z">0</span>,          <span class="z">0</span>,
       −.2,       1.11,          <span class="z">0</span>,          <span class="z">0</span>,
      −.29,        .44,          <span class="z">0</span>,          <span class="z">0</span>,
       −.2,        .43,          <span class="z">0</span>,          <span class="z">0</span>,
       .49,       −.74,          1,          <span class="z">0</span>,
       .27,       −.96,          1,          <span class="z">0</span>,
      −.28,       −.68,          <span class="z">0</span>,          <span class="z">0</span>,
      −.23,       −.26,          <span class="z">0</span>,          <span class="z">0</span>,
      −.34,       −.85,          <span class="z">0</span>,          <span class="z">0</span>,
       .43,       −.63,          1,          <span class="z">0</span>,
      −.41,       −.11,          <span class="z">0</span>,          <span class="z">0</span>,
      −.27,        .<span class="z">0</span>5,          <span class="z">0</span>,          <span class="z">0</span>,
       .65      −1.13          1          <span class="z">0</span>
       .57        .36          1          <span class="z">0</span></div>

<!-- status line -->
<div class="a" style="left:14px;top:551px;width:16px;height:1px;background:#686868"></div>
<div class="a mono" style="left:6px;top:546px;color:#000080">    h1<span class="z">0</span>5_bugs.raw [Fundamental] 442,<span class="z">0</span> Bot *</div>
<div class="a" style="left:358px;top:551px;width:408px;height:1px;background:#686868"></div>

</body></html>
